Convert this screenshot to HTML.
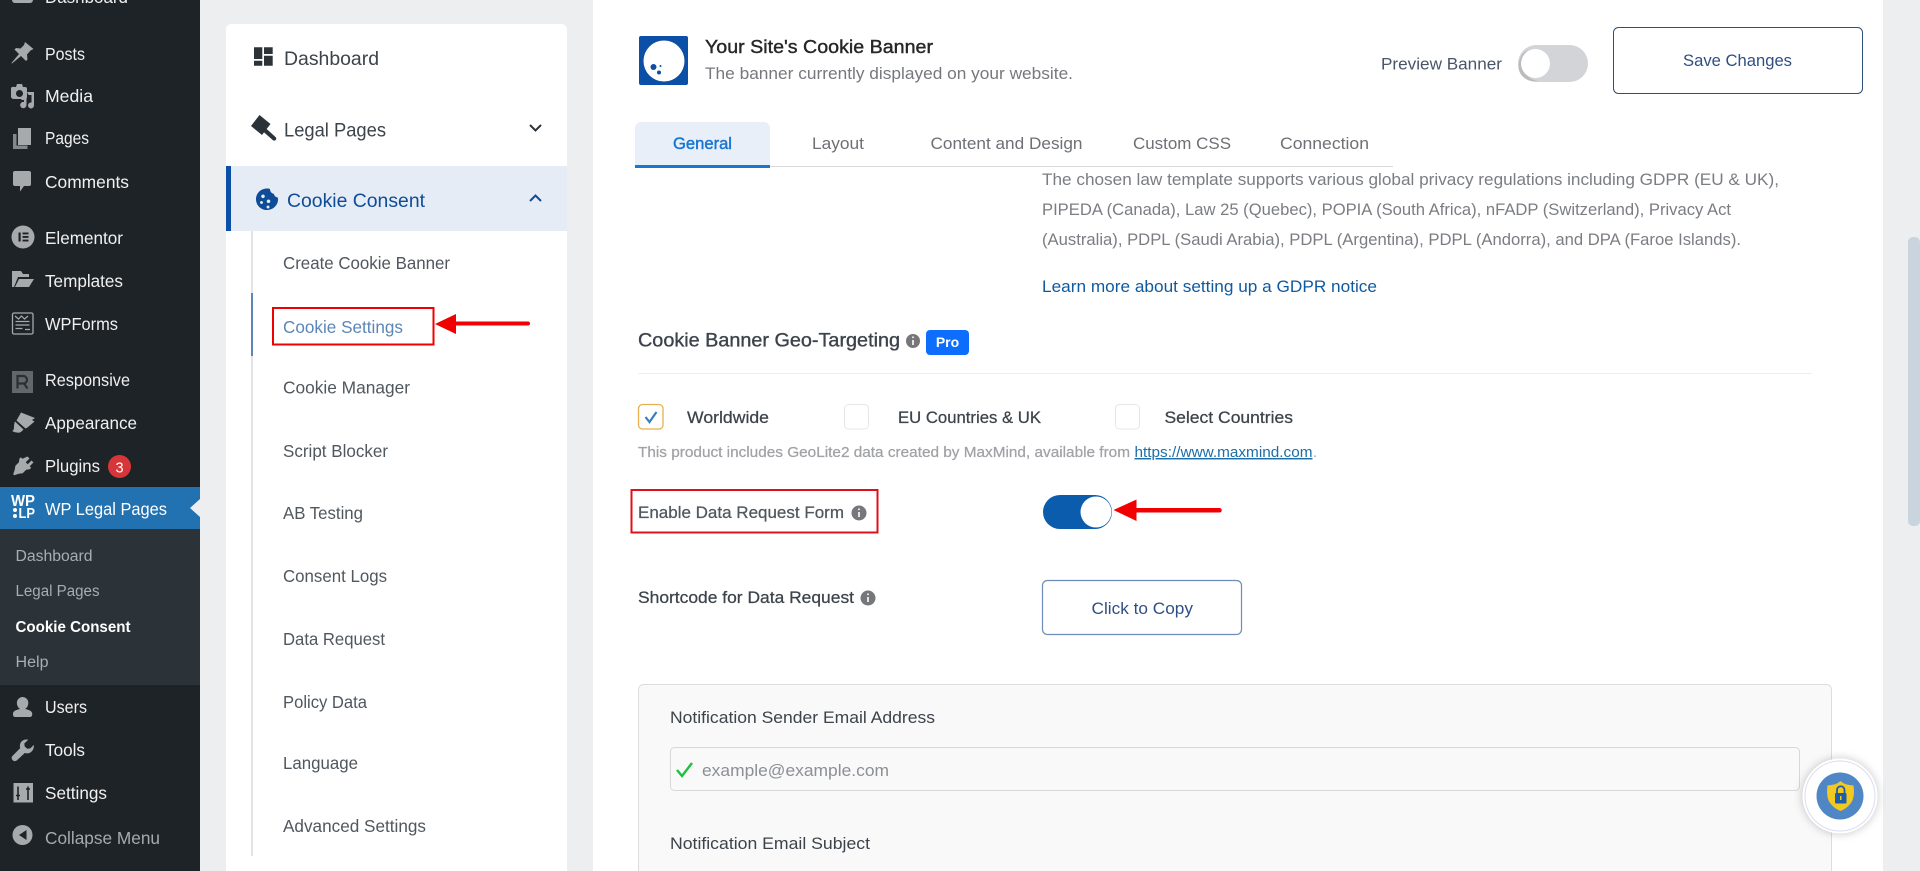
<!DOCTYPE html>
<html lang="en"><head><meta charset="utf-8"><title>Cookie Settings</title>
<style>
html,body{margin:0;padding:0;width:1920px;height:871px;overflow:hidden;background:#eceef0}
svg{display:block;position:absolute;left:0;top:0}
text{font-family:"Liberation Sans",sans-serif;white-space:pre}
.w{font-size:17.5px;fill:#f0f0f1}
.s{font-size:15.5px;fill:#a9adb1}
.n{font-size:19.5px;fill:#3c434a}
.i{font-size:17.5px;fill:#50575e}
.p{font-size:17px;fill:#7a7d82}
.m{font-size:17px;fill:#3c434a;stroke:#3c434a;stroke-width:.25px}
.ic{fill:#a7aaad}
</style></head><body>
<svg width="1920" height="871" viewBox="0 0 1920 871" xmlns="http://www.w3.org/2000/svg">
<rect width="1920" height="871" fill="#eceef0"/>
<!-- WP sidebar -->
<rect width="200" height="871" fill="#1d2327"/>
<rect y="487" width="200" height="42" fill="#2271b1"/>
<rect y="529" width="200" height="156" fill="#2c3338"/>
<path d="M200 499L190 508L200 517z" fill="#eceef0"/>
<rect x="12" y="-10" width="21" height="13" rx="3" class="ic"/>
<text class="w" x="45" y="3" textLength="83" lengthAdjust="spacingAndGlyphs">Dashboard</text>
<text class="w" x="45" y="60" textLength="40" lengthAdjust="spacingAndGlyphs">Posts</text>
<text class="w" x="45" y="102" textLength="48" lengthAdjust="spacingAndGlyphs">Media</text>
<text class="w" x="45" y="144" textLength="44" lengthAdjust="spacingAndGlyphs">Pages</text>
<text class="w" x="45" y="188" textLength="84" lengthAdjust="spacingAndGlyphs">Comments</text>
<text class="w" x="45" y="244" textLength="78" lengthAdjust="spacingAndGlyphs">Elementor</text>
<text class="w" x="45" y="287" textLength="78" lengthAdjust="spacingAndGlyphs">Templates</text>
<text class="w" x="45" y="330" textLength="73" lengthAdjust="spacingAndGlyphs">WPForms</text>
<text class="w" x="45" y="386" textLength="85" lengthAdjust="spacingAndGlyphs">Responsive</text>
<text class="w" x="45" y="429" textLength="92" lengthAdjust="spacingAndGlyphs">Appearance</text>
<text class="w" x="45" y="472" textLength="55" lengthAdjust="spacingAndGlyphs">Plugins</text>
<text class="w" x="45" y="515" textLength="122" lengthAdjust="spacingAndGlyphs" style="fill:#fff">WP Legal Pages</text>
<text class="s" x="15.5" y="561" textLength="77" lengthAdjust="spacingAndGlyphs">Dashboard</text>
<text class="s" x="15.5" y="596" textLength="84" lengthAdjust="spacingAndGlyphs">Legal Pages</text>
<text class="s" x="15.5" y="632" textLength="115" lengthAdjust="spacingAndGlyphs" style="fill:#fff;font-weight:700">Cookie Consent</text>
<text class="s" x="15.5" y="667" textLength="33" lengthAdjust="spacingAndGlyphs">Help</text>
<text class="w" x="45" y="713" textLength="42" lengthAdjust="spacingAndGlyphs">Users</text>
<text class="w" x="45" y="756" textLength="40" lengthAdjust="spacingAndGlyphs">Tools</text>
<text class="w" x="45" y="799" textLength="62" lengthAdjust="spacingAndGlyphs">Settings</text>
<text class="w" x="45" y="844" textLength="115" lengthAdjust="spacingAndGlyphs" style="fill:#a7aaad">Collapse Menu</text>
<!-- WP icons -->
<path class="ic" d="M25 42l8.500 7-3 1.500-3.500 4 .5 5-1.500 1.500-5-5-9 7.500-.5-.5 7.500-9-4.500-4.500 1.500-1.500 4.500.5 3.500-3.500z"/>
<path class="ic" fill-rule="evenodd" d="M14 87h2l1-3h5l1 3h2a2 2 0 0 1 2 2v8a2 2 0 0 1-2 2H14a3 3 0 0 1-3-2v-8a2 2 0 0 1 3-2zm5.500 3a3.500 3.500 0 1 0 .01 0z"/>
<path class="ic" d="M27 92h7v13.500a3 3 0 1 1-2.500-3V95h-3zM21.500 98h5v7a3.200 3.200 0 1 1-6.400 0 3.200 3.200 0 0 1 3.900-3v-2h-2.500z"/>
<path class="ic" d="M18 128h13v17H18z"/><path class="ic" d="M13 134h3.500v11.500h11v3.500H13z" opacity=".75"/>
<path class="ic" d="M15 171h14a2 2 0 0 1 2 2v11a2 2 0 0 1-2 2h-5l-4 5.500V186h-5a2 2 0 0 1-2-2v-11a2 2 0 0 1 2-2z"/>
<circle class="ic" cx="23" cy="237" r="11.500"/><path fill="#1d2327" d="M18.500 232.500h2.200v9h-2.200zM22.500 232.500h6v1.900h-6zM22.500 236h6v1.900h-6zM22.500 239.600h6v1.900h-6z"/>
<path class="ic" d="M12 271h9l2 3h6v3H18l-4 10h-2zM19 279h15l-5 8H15z"/>
<rect x="12.500" y="313" width="20.500" height="21" rx="1.500" fill="none" stroke="#a7aaad" stroke-width="1.300"/>
<path d="M15 316l3.500 3 3-3 3 3 3.500-3M15.500 321.500h14M15.500 325h14M15.500 328.500h7M25 329.500h5" stroke="#a7aaad" stroke-width="1.200" fill="none"/>
<rect x="12" y="371" width="21" height="22" fill="#62676b"/>
<path d="M17.500 388.500V376h6a3.800 3.800 0 0 1 .5 7.500l3.500 5M17.500 383.500h6" stroke="#2b3035" stroke-width="2.200" fill="none"/>
<path class="ic" d="M21 412.500l14 5.500-3 2 2.500 1.500-7 6-2 1-9-8z"/>
<path class="ic" d="M15 421.500l8.500 8-1.500 1.500c-1.500 1.500-3 2-5 1.500-1.500 0-3-.5-5-1.500 1.500-.5 2-2 2-4 0-2.500.5-4.500 1-5.500z"/>
<path class="ic" d="M27.500 456.500l2 2-3.800 3.800 2 2 3.800-3.800 2 2-3.800 3.800 1.500 1.500-1.500 1.500-3.500.5-3.500 3.500-4 .5-4.500 1.500-1-1 1.500-4.500.7-4 3.500-3.500.5-3.500 1.500-1.500 1.500 1.500z"/>
<text x="11" y="506" font-size="16" font-weight="700" fill="#fff" textLength="24" lengthAdjust="spacingAndGlyphs">WP</text>
<circle cx="15" cy="510" r="2" fill="#fff"/><circle cx="15" cy="516" r="2" fill="#fff"/>
<text x="18.500" y="518" font-size="14.500" font-weight="700" fill="#fff" textLength="16.500" lengthAdjust="spacingAndGlyphs">LP</text>
<circle cx="119.500" cy="466.500" r="11.500" fill="#d63638"/>
<text x="119.500" y="472.500" font-size="14.500" fill="#fff" text-anchor="middle">3</text>
<path class="ic" d="M22.500 697a5.800 5.800 0 0 1 5.800 6c0 3-1.800 5.300-3.300 6 4 .7 7.200 2.300 7.200 4.500v1.200c0 1.300-1 2.300-2.300 2.300H15.200c-1.300 0-2.200-1-2.200-2.300v-1.200c0-2.200 3.200-3.800 7.200-4.500-1.500-.7-3.300-3-3.300-6a5.800 5.800 0 0 1 5.600-6z"/>
<path class="ic" d="M28 740l-3.700 3.500.4 3 2.600 2.300 3-.4 3.500-3.500c.3 3-.7 5.700-3 7.300-2 1.300-4 1.500-6 .8l-7.800 7.300c-1.500 1.200-3.300 1-4.400-.2-1.300-1.300-1.200-3.200 0-4.300l7.600-7.700c-.7-2-.4-4.400 1-6.300 1.700-2 4-2.700 6.800-2.200z"/>
<rect class="ic" x="13.500" y="783" width="19.500" height="19.500"/>
<path d="M18 786.500V800M28 786.500V800M16 795.500h4M26 789h4" stroke="#1d2327" stroke-width="1.600" fill="none"/>
<circle class="ic" cx="22.500" cy="835" r="10"/><path fill="#1d2327" d="M26.500 830v10l-7.500-5z"/>

<!-- Nav panel -->
<rect x="226" y="24" width="341" height="860" rx="5" fill="#fff"/>
<rect x="226" y="166" width="341" height="65" fill="#e6ecf5"/>
<rect x="226" y="166" width="5" height="65" fill="#0b4fa6"/>
<rect x="251" y="231" width="2" height="625" fill="#e2e4e7"/>
<rect x="251" y="293" width="2" height="63" fill="#5b86b8"/>
<path fill="#2c3338" d="M254 47.300h8.300V59H254zM254 60.700h8.300v5H254zM264 47.300h8.700V54H264zM264 55.700h8.700v10H264z"/>
<text class="n" x="284" y="65" textLength="95" lengthAdjust="spacingAndGlyphs">Dashboard</text>
<path fill="#2c3338" d="M259.500 115l11 9-8.500 11-11-9zM265 127.500l10.500 9.500c1 1 1 2 .2 3-.9.900-2 .9-3 0l-10.500-9.300z"/>
<text class="n" x="284" y="136.500" textLength="102" lengthAdjust="spacingAndGlyphs">Legal Pages</text>
<path d="M530 125l5.500 5.500 5.500-5.500" fill="none" stroke="#2c3338" stroke-width="2"/>
<path fill="#0f4c97" fill-rule="evenodd" d="M267 188.500c1.500 0 2.500 0 3 .5 0 2.500 1.500 4.500 3.800 4.800.5 2.200 2 3.500 4 3.700.2 1 .2 1.500.2 2 0 5.800-5 10.500-11 10.500s-11-4.700-11-10.800 5-10.700 11-10.700zm-4 6a1.800 1.800 0 1 0 .01 0zm5.500 5a1.800 1.800 0 1 0 .01 0zM261.500 201a1.500 1.500 0 1 0 .01 0zm6.500 4.500a1.500 1.500 0 1 0 .01 0z"/>
<text class="n" x="287" y="207" textLength="138" lengthAdjust="spacingAndGlyphs" style="fill:#0f4c97">Cookie Consent</text>
<path d="M530 201l5.500-5.500 5.500 5.500" fill="none" stroke="#0f4c97" stroke-width="2"/>
<text class="i" x="283" y="269" textLength="167" lengthAdjust="spacingAndGlyphs">Create Cookie Banner</text>
<text class="i" x="283" y="333" textLength="120" lengthAdjust="spacingAndGlyphs" style="fill:#5b86b8">Cookie Settings</text>
<text class="i" x="283" y="393.500" textLength="127" lengthAdjust="spacingAndGlyphs">Cookie Manager</text>
<text class="i" x="283" y="457" textLength="105" lengthAdjust="spacingAndGlyphs">Script Blocker</text>
<text class="i" x="283" y="519" textLength="80" lengthAdjust="spacingAndGlyphs">AB Testing</text>
<text class="i" x="283" y="582" textLength="104" lengthAdjust="spacingAndGlyphs">Consent Logs</text>
<text class="i" x="283" y="645" textLength="102" lengthAdjust="spacingAndGlyphs">Data Request</text>
<text class="i" x="283" y="708" textLength="84" lengthAdjust="spacingAndGlyphs">Policy Data</text>
<text class="i" x="283" y="769" textLength="75" lengthAdjust="spacingAndGlyphs">Language</text>
<text class="i" x="283" y="832" textLength="143" lengthAdjust="spacingAndGlyphs">Advanced Settings</text>
<rect x="273" y="308" width="160.500" height="36.500" fill="none" stroke="#f00000" stroke-width="2"/>
<path d="M435 324l21-10v7.500h72a2 2 0 0 1 0 4h-72v8.500z" fill="#f00000"/>

<!-- Main card -->
<rect x="593" y="0" width="1290" height="871" fill="#fff"/>
<rect x="1908" y="237" width="12" height="289" rx="5" fill="#c9d4df"/>
<rect x="639" y="36" width="49" height="49" rx="2" fill="#0b4fa6"/>
<circle cx="664" cy="61" r="20.500" fill="#fff"/>
<circle cx="653.500" cy="67" r="3" fill="#0b4fa6"/><circle cx="659" cy="72.500" r="2" fill="#0b4fa6"/><circle cx="660.500" cy="66" r="1" fill="#0b4fa6"/>
<text x="705" y="53" font-size="18.500" fill="#262626" stroke="#262626" stroke-width=".4" textLength="228" lengthAdjust="spacingAndGlyphs">Your Site's Cookie Banner</text>
<text x="705" y="79" font-size="17" fill="#76787c" textLength="368" lengthAdjust="spacingAndGlyphs">The banner currently displayed on your website.</text>
<text x="1381" y="69.500" font-size="17" fill="#4a5568" textLength="121" lengthAdjust="spacingAndGlyphs">Preview Banner</text>
<rect x="1518" y="45" width="70" height="37" rx="18.500" fill="#d3d4d8"/>
<path d="M1528 50a18 18 0 0 0 10 31c-12 2-22-7-19-19 1-5 4-10 9-12z" fill="#b4b4b6" opacity=".8"/>
<circle cx="1535.500" cy="63.500" r="14.500" fill="#fff"/>
<rect x="1613.500" y="27.500" width="249" height="66" rx="5" fill="#fff" stroke="#2d4f7c" stroke-width="1"/>
<text x="1683" y="66" font-size="17" fill="#2f4f84" textLength="109" lengthAdjust="spacingAndGlyphs">Save Changes</text>

<!-- Tabs -->
<path d="M635 167v-39a6 6 0 0 1 6-6h123a6 6 0 0 1 6 6v39z" fill="#e9eff8"/>
<rect x="635" y="166" width="758" height="1" fill="#dadadc"/>
<rect x="635" y="165" width="135" height="3" fill="#1976d2"/>
<text x="673" y="149" font-size="17" fill="#1976d2" stroke="#1976d2" stroke-width=".45" textLength="59" lengthAdjust="spacingAndGlyphs">General</text>
<text x="812" y="149" font-size="17" fill="#6d7074" textLength="52" lengthAdjust="spacingAndGlyphs">Layout</text>
<text x="930.500" y="149" font-size="17" fill="#6d7074" textLength="152" lengthAdjust="spacingAndGlyphs">Content and Design</text>
<text x="1133" y="149" font-size="17" fill="#6d7074" textLength="98" lengthAdjust="spacingAndGlyphs">Custom CSS</text>
<text x="1280" y="149" font-size="17" fill="#6d7074" textLength="89" lengthAdjust="spacingAndGlyphs">Connection</text>

<!-- Paragraph -->
<text class="p" x="1042" y="185" textLength="737" lengthAdjust="spacingAndGlyphs">The chosen law template supports various global privacy regulations including GDPR (EU &amp; UK),</text>
<text class="p" x="1042" y="215" textLength="689" lengthAdjust="spacingAndGlyphs">PIPEDA (Canada), Law 25 (Quebec), POPIA (South Africa), nFADP (Switzerland), Privacy Act</text>
<text class="p" x="1042" y="245" textLength="699" lengthAdjust="spacingAndGlyphs">(Australia), PDPL (Saudi Arabia), PDPL (Argentina), PDPL (Andorra), and DPA (Faroe Islands).</text>
<text x="1042" y="292" font-size="17" fill="#0f5a9e" textLength="335" lengthAdjust="spacingAndGlyphs">Learn more about setting up a GDPR notice</text>

<!-- Geo -->
<text x="638" y="346.500" font-size="19" fill="#3c434a" stroke="#3c434a" stroke-width=".35" textLength="262" lengthAdjust="spacingAndGlyphs">Cookie Banner Geo-Targeting</text>
<circle cx="913" cy="341" r="7" fill="#75777b"/><path d="M913 336.500v1.600M913 340v5" stroke="#fff" stroke-width="1.600"/>
<rect x="926" y="330" width="43" height="25" rx="4" fill="#0d6efd"/>
<text x="947.500" y="347" font-size="14" font-weight="700" fill="#fff" text-anchor="middle">Pro</text>
<rect x="638" y="373" width="1174" height="1" fill="#eeeeee"/>
<rect x="638.500" y="404.500" width="24.500" height="24.500" rx="4" fill="#fff" stroke="#e8b04f" stroke-width="1.300"/>
<path d="M645.500 417l4 5 7-10" fill="none" stroke="#3a7ebf" stroke-width="2.200"/>
<text class="m" x="687" y="423" textLength="82" lengthAdjust="spacingAndGlyphs">Worldwide</text>
<rect x="844.500" y="404.500" width="24" height="24.500" rx="4" fill="#fff" stroke="#e6e7e9"/>
<text class="m" x="898" y="423" textLength="143" lengthAdjust="spacingAndGlyphs">EU Countries &amp; UK</text>
<rect x="1115.500" y="404.500" width="24" height="24.500" rx="4" fill="#fff" stroke="#e6e7e9"/>
<text class="m" x="1164.500" y="423" textLength="128.500" lengthAdjust="spacingAndGlyphs">Select Countries</text>
<text x="638" y="457" font-size="14.500" fill="#a0a2a6" stroke="#a0a2a6" stroke-width=".25" textLength="492" lengthAdjust="spacingAndGlyphs">This product includes GeoLite2 data created by MaxMind, available from</text>
<text x="1134.500" y="457" font-size="14.500" fill="#1b6ea8" text-decoration="underline" textLength="178" lengthAdjust="spacingAndGlyphs">https://www.maxmind.com</text>
<text x="1313" y="457" font-size="14.500" fill="#a0a2a6">.</text>

<!-- Enable -->
<rect x="631.500" y="490" width="246" height="42.500" fill="none" stroke="#e0101a" stroke-width="2"/>
<text class="m" x="638" y="518" textLength="206" lengthAdjust="spacingAndGlyphs" style="fill:#50575e;stroke:#50575e">Enable Data Request Form</text>
<circle cx="859" cy="513" r="7.500" fill="#75777b"/><path d="M859 508.500v1.600M859 512v5" stroke="#fff" stroke-width="1.600"/>
<rect x="1043" y="495" width="69" height="34" rx="17" fill="#0b5cad"/>
<circle cx="1096" cy="512" r="15.500" fill="#fff"/>
<path d="M1113.500 510l23-10.500v8.500h83a2 2 0 0 1 0 4.500h-83v8.500z" fill="#f00000"/>

<!-- Shortcode -->
<text class="m" x="638" y="603" textLength="216" lengthAdjust="spacingAndGlyphs">Shortcode for Data Request</text>
<circle cx="868" cy="598" r="7.500" fill="#75777b"/><path d="M868 593.500v1.600M868 597v5" stroke="#fff" stroke-width="1.600"/>
<rect x="1042.500" y="580.500" width="199" height="54" rx="5" fill="#fff" stroke="#6d8db8" stroke-width="1.200"/>
<text x="1091.500" y="614" font-size="17" fill="#2f4f84" textLength="101.500" lengthAdjust="spacingAndGlyphs">Click to Copy</text>

<!-- Panel -->
<rect x="638.500" y="684.500" width="1193" height="220" rx="5" fill="#f9f9f9" stroke="#dddddd"/>
<text x="670" y="723" font-size="17" fill="#3c434a" textLength="265" lengthAdjust="spacingAndGlyphs">Notification Sender Email Address</text>
<rect x="670.500" y="747.500" width="1129" height="43" rx="4" fill="#f9f9f9" stroke="#d8d8d8"/>
<path d="M677 770l5 6 10-13" fill="none" stroke="#1fc13c" stroke-width="2.400"/>
<text x="702" y="776" font-size="17" fill="#8c8f94" textLength="187" lengthAdjust="spacingAndGlyphs">example@example.com</text>
<text x="670" y="849" font-size="17" fill="#3c434a" textLength="200" lengthAdjust="spacingAndGlyphs">Notification Email Subject</text>

<!-- Floating badge -->
<defs><filter id="sh" x="-40%" y="-40%" width="180%" height="180%"><feGaussianBlur stdDeviation="5"/></filter></defs>
<circle cx="1840" cy="796" r="37" fill="#000" opacity=".25" filter="url(#sh)"/>
<circle cx="1840" cy="796" r="37.500" fill="#fff"/>
<circle cx="1840" cy="796" r="35" fill="#fff" stroke="#dcdcf4"/>
<circle cx="1840" cy="796" r="23.500" fill="#4f86c6"/>
<path d="M1840.500 781c3 3 7 4 13 4.500 1 7 .5 14-3 18-3 4-6.500 6-10 7.500-3.500-1.500-7-3.500-10-7.500-3.500-4-4-11-3-18 6-.5 10-1.500 13-4.500z" fill="#f3c81f"/>
<rect x="1835" y="793" width="11.500" height="10.500" rx="1" fill="#1d5ea8"/>
<path d="M1837 793v-3a3.700 3.700 0 0 1 7.500 0v3" fill="none" stroke="#1d5ea8" stroke-width="1.800"/>
<rect x="1840" y="796" width="1.500" height="4" fill="#f3c81f"/>
</svg>
</body></html>
